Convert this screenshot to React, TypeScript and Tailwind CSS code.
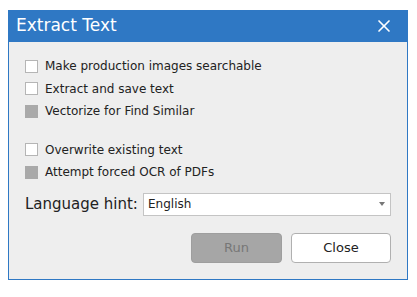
import { X } from "lucide-react";

const OPTIONS = [
  { label: "Make production images searchable", disabled: false },
  { label: "Extract and save text", disabled: false },
  { label: "Vectorize for Find Similar", disabled: true },
];

const OPTIONS2 = [
  { label: "Overwrite existing text", disabled: false },
  { label: "Attempt forced OCR of PDFs", disabled: true },
];

function Check({ label, disabled }: { label: string; disabled: boolean }) {
  return (
    <div className="flex items-center h-[22.5px] gap-[7px]">
      <div
        className={`w-[13px] h-[13px] shrink-0 border ${
          disabled ? "bg-[#a9a9a9] border-[#a9a9a9]" : "bg-white border-[#b5b5b5]"
        }`}
      />
      <span className="text-[12px] text-[#222]">{label}</span>
    </div>
  );
}

export default function App() {
  return (
    <div className="w-[417px] h-[297px] bg-white pt-[10px] pl-[8px] font-['DejaVu_Sans',sans-serif]">
      <div className="w-[400px] h-[270px] border border-[#2f78c4] bg-[#eeeeee] flex flex-col">
        {/* Header */}
        <div className="h-[32px] bg-[#2f78c4] flex items-center justify-between pl-[8px] pr-[14px] -mt-px -mx-px">
          <span className="text-[17px] text-white">Extract Text</span>
          <X className="w-[20px] h-[20px] text-white" strokeWidth={2} />
        </div>

        {/* Body */}
        <div className="pl-[16px] pr-[16px] pt-[13px] flex flex-col">
          {OPTIONS.map((o) => (
            <Check key={o.label} {...o} />
          ))}
          <div className="h-[16px]" />
          {OPTIONS2.map((o) => (
            <Check key={o.label} {...o} />
          ))}

          <div className="flex items-center mt-[9px]">
            <span className="text-[15px] text-[#222] w-[118px]">Language hint:</span>
            <div className="flex-1 h-[23px] bg-white border border-[#c4c4c4] flex items-center justify-between pl-[4px] pr-[5px]">
              <span className="text-[12px] text-[#222]">English</span>
              <span className="w-0 h-0 border-l-[3px] border-r-[3px] border-t-[4px] border-l-transparent border-r-transparent border-t-[#777]" />
            </div>
          </div>

          <div className="flex justify-end gap-[9px] mt-[17px]">
            <button className="w-[91px] h-[30px] rounded-[4px] bg-[#a6a6a6] border border-[#9e9e9e] text-[13px] text-[#777]">
              Run
            </button>
            <button className="w-[100px] h-[30px] rounded-[4px] bg-white border border-[#b0b0b0] text-[13px] text-[#222]">
              Close
            </button>
          </div>
        </div>
      </div>
    </div>
  );
}
